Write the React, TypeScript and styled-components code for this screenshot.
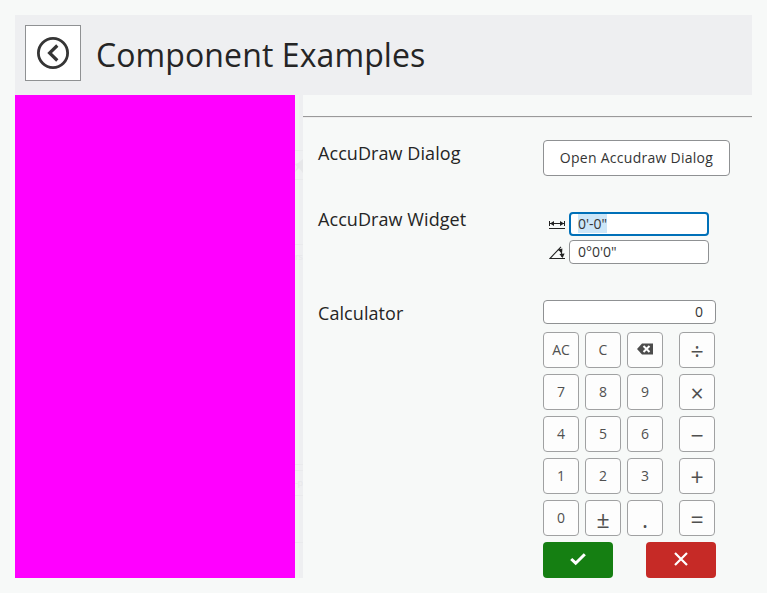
import React, { useEffect, useRef } from "react";
import styled, { createGlobalStyle } from "styled-components";

const GlobalStyle = createGlobalStyle`
  *, *::before, *::after { box-sizing: border-box; }
  html, body, #root { height: 100%; }
  body {
    margin: 0;
    background: #f7f9f8;
    color: #252525;
    font-family: "Open Sans", sans-serif;
    font-size: 14px;
    overflow: hidden;
  }
`;

const Page = styled.div`
  height: 100%;
  padding: 15px;
  display: flex;
  flex-direction: column;
`;

const Header = styled.header`
  flex: none;
  height: 80px;
  padding-left: 10px;
  display: flex;
  align-items: center;
  gap: 15px;
  background: #eeeff1;
`;

const BackButton = styled.button`
  width: 56px;
  height: 56px;
  margin-bottom: 4px;
  padding: 0;
  display: grid;
  place-items: center;
  border: 1px solid #8f9193;
  background: #fff;
  color: #353535;
`;

const Title = styled.h1`
  margin: 0;
  font-size: 32px;
  font-weight: 400;
  line-height: 44px;
  letter-spacing: 0.1px;
`;

const Main = styled.main`
  flex: 1;
  min-height: 0;
  display: flex;
`;

const Viewport = styled.div`
  flex: none;
  width: 280px;
  background: #f0f;
`;

const Gutter = styled.div`
  flex: none;
  width: 8px;
  overflow: hidden;
  background: linear-gradient(to right, #f1f2f3 4px, #eeeff1 4px);
  color: #e6e7e9;
`;

const GutterLine = styled.div<{ $gap: number }>`
  height: 1px;
  margin-top: ${(p) => p.$gap}px;
  background: #e9eaec;
`;

const GutterRow = styled.div<{ $height: number }>`
  height: ${(p) => p.$height}px;
  font-size: 9px;
  letter-spacing: -0.3px;
  line-height: ${(p) => p.$height}px;
  white-space: nowrap;

  svg { display: block; padding-top: 8px; height: 22px; }
`;

const Examples = styled.section`
  flex: 1;
  padding-top: 21px;
`;

const Divider = styled.hr`
  height: 2px;
  margin: 0;
  border: 0;
  border-top: 1px solid #9a9a9a;
  border-bottom: 1px solid #eeeeee;
`;

const Example = styled.div<{ $top: number }>`
  display: grid;
  grid-template-columns: 225px auto;
  justify-content: start;
  align-items: start;
  margin-top: ${(p) => p.$top}px;
  padding-left: 15px;
`;

const Label = styled.div`
  font-size: 18px;
  line-height: 26px;
  letter-spacing: 0.07px;
`;

const OpenButton = styled.button`
  width: 187px;
  height: 36px;
  padding: 0 0 2px;
  border: 1px solid #8f9193;
  border-radius: 4px;
  background: #fff;
  color: #353535;
  font: 14px "Open Sans", sans-serif;
  letter-spacing: 0.27px;
`;

const Fields = styled.div`
  display: grid;
  gap: 4px;
  padding: 6px 0 0 6px;
`;

const Field = styled.label`
  display: grid;
  grid-template-columns: 16px 140px;
  column-gap: 4px;
  align-items: center;

  svg { margin-top: 2px; }
`;

const Input = styled.input`
  width: 100%;
  height: 24px;
  padding: 0 8px 2px;
  border: 1px solid #8f9193;
  border-radius: 4px;
  outline: none;
  background: #fff;
  color: #353535;
  font: 14px/18px "Open Sans", sans-serif;

  &:focus {
    padding: 0 7px 2px;
    border: 2px solid #0070b8;
  }
  &::selection { background: #cce6f8; color: #353535; }
`;

const CalculatorBox = styled.div`
  width: 173px;
`;

const Display = styled.div`
  height: 24px;
  padding-right: 12px;
  border: 1px solid #8f9193;
  border-radius: 4px;
  background: #fff;
  color: #353535;
  line-height: 22px;
  text-align: right;
`;

const Keys = styled.div`
  display: grid;
  grid-template-columns: 36px 36px 36px 36px;
  grid-auto-rows: 36px;
  gap: 6px;
  margin-top: 8px;

  & > :nth-child(4n) { margin-left: 10px; }
`;

const Key = styled.button<{ $symbol?: boolean }>`
  width: 36px;
  height: 36px;
  padding: 0;
  display: grid;
  place-items: center;
  border: 1px solid #a0a1a2;
  border-radius: 4px;
  background: #fdfdfd;
  color: #505050;
  font: 14px/20px "Open Sans", sans-serif;
  ${(p) => p.$symbol && "font-size: 23px; padding-top: 2px;"}

  svg { margin-bottom: 3px; }
`;

const Actions = styled.div`
  display: flex;
  justify-content: space-between;
  margin-top: 6px;
`;

const Action = styled.button<{ $color: string }>`
  width: 70px;
  height: 36px;
  padding: 0;
  display: grid;
  place-items: center;
  border: 0;
  border-radius: 4px;
  background: ${(p) => p.$color};

  svg { margin-bottom: 2px; }
`;

const BackIcon = () => (
  <svg width="32" height="32" viewBox="0 0 32 32" fill="none" stroke="currentColor" strokeWidth="2.8">
    <circle cx="16" cy="16" r="14.6" />
    <path d="M20.3 8.5 12.6 16l7.7 7.5" strokeWidth="3.2" />
  </svg>
);

const DistanceIcon = () => (
  <svg width="16" height="16" viewBox="0 0 16 16">
    <path d="M0 4h1v5H0zM15 4h1v5h-1zM1 6h14v1H1zM0 11h16v1H0z" fill="#222" />
    <path d="M1 6.5l4-2.5v5zM15 6.5l-4-2.5v5z" fill="#222" />
  </svg>
);

const AngleIcon = () => (
  <svg width="16" height="16" viewBox="0 0 16 16">
    <path d="M12 1.8.9 13.5H16" fill="none" stroke="#222" strokeWidth="1.1" />
    <path d="M10.5 4.5Q13 7 13 12" fill="none" stroke="#222" strokeWidth="1.2" />
    <path d="M8.6 4.8l4.8-1.3-.3 4.3zM10.4 9l5.2-.5-2 4.5z" fill="#222" />
  </svg>
);

const BackspaceIcon = () => (
  <svg width="16" height="12" viewBox="0 0 16 12">
    <path d="M0 6 5 .5h11v11H5z" fill="#4c4c4c" />
    <path d="m6.5 3 6 6m0-6-6 6" stroke="#fff" strokeWidth="2" />
  </svg>
);

const CheckIcon = () => (
  <svg width="16" height="14" viewBox="0 0 16 14" fill="none" stroke="#fff" strokeWidth="3">
    <path d="m1.2 7 4.5 4.2L14.8 2.2" />
  </svg>
);

const CloseIcon = () => (
  <svg width="14" height="14" viewBox="0 0 14 14" stroke="#fff" strokeWidth="2.2">
    <path d="m1 1 12 12M13 1 1 13" />
  </svg>
);

const PinIcon = () => (
  <svg width="8" height="14" viewBox="0 0 8 14" fill="currentColor">
    <path d="M0 5 3 4 8 0v14L4 9 0 13l2-5z" />
  </svg>
);

const keys = [
  "AC", "C", "back", "÷",
  "7", "8", "9", "×",
  "4", "5", "6", "−",
  "1", "2", "3", "+",
  "0", "±", ".", "=",
];

export default function App() {
  const distance = useRef<HTMLInputElement>(null);
  useEffect(() => {
    distance.current?.focus();
    distance.current?.select();
  }, []);

  return (
    <Page>
      <GlobalStyle />
      <Header>
        <BackButton aria-label="Back"><BackIcon /></BackButton>
        <Title>Component Examples</Title>
      </Header>
      <Main>
        <Viewport />
        <Gutter aria-hidden>
          <GutterLine $gap={55} />
          <GutterRow $height={28}><PinIcon /></GutterRow>
          <GutterLine $gap={0} />
          <GutterLine $gap={64} />
          <GutterRow $height={24}>rs</GutterRow>
          <GutterLine $gap={195} />
          <GutterLine $gap={5} />
          <GutterRow $height={24}>-p</GutterRow>
          <GutterLine $gap={0} />
          <GutterLine $gap={46} />
        </Gutter>
        <Examples>
          <Divider />
          <Example $top={22}>
            <Label>AccuDraw Dialog</Label>
            <OpenButton>Open Accudraw Dialog</OpenButton>
          </Example>
          <Example $top={30}>
            <Label>AccuDraw Widget</Label>
            <Fields>
              <Field><DistanceIcon /><Input ref={distance} defaultValue={`0'-0"`} /></Field>
              <Field><AngleIcon /><Input defaultValue={`0°0'0"`} /></Field>
            </Fields>
          </Example>
          <Example $top={36}>
            <Label>Calculator</Label>
            <CalculatorBox>
              <Display>0</Display>
              <Keys>
                {keys.map((k) => (
                  <Key key={k} $symbol={"÷×−+±.=".includes(k)}>
                    {k === "back" ? <BackspaceIcon /> : k}
                  </Key>
                ))}
              </Keys>
              <Actions>
                <Action $color="#157f12" aria-label="OK"><CheckIcon /></Action>
                <Action $color="#c62a26" aria-label="Cancel"><CloseIcon /></Action>
              </Actions>
            </CalculatorBox>
          </Example>
        </Examples>
      </Main>
    </Page>
  );
}
